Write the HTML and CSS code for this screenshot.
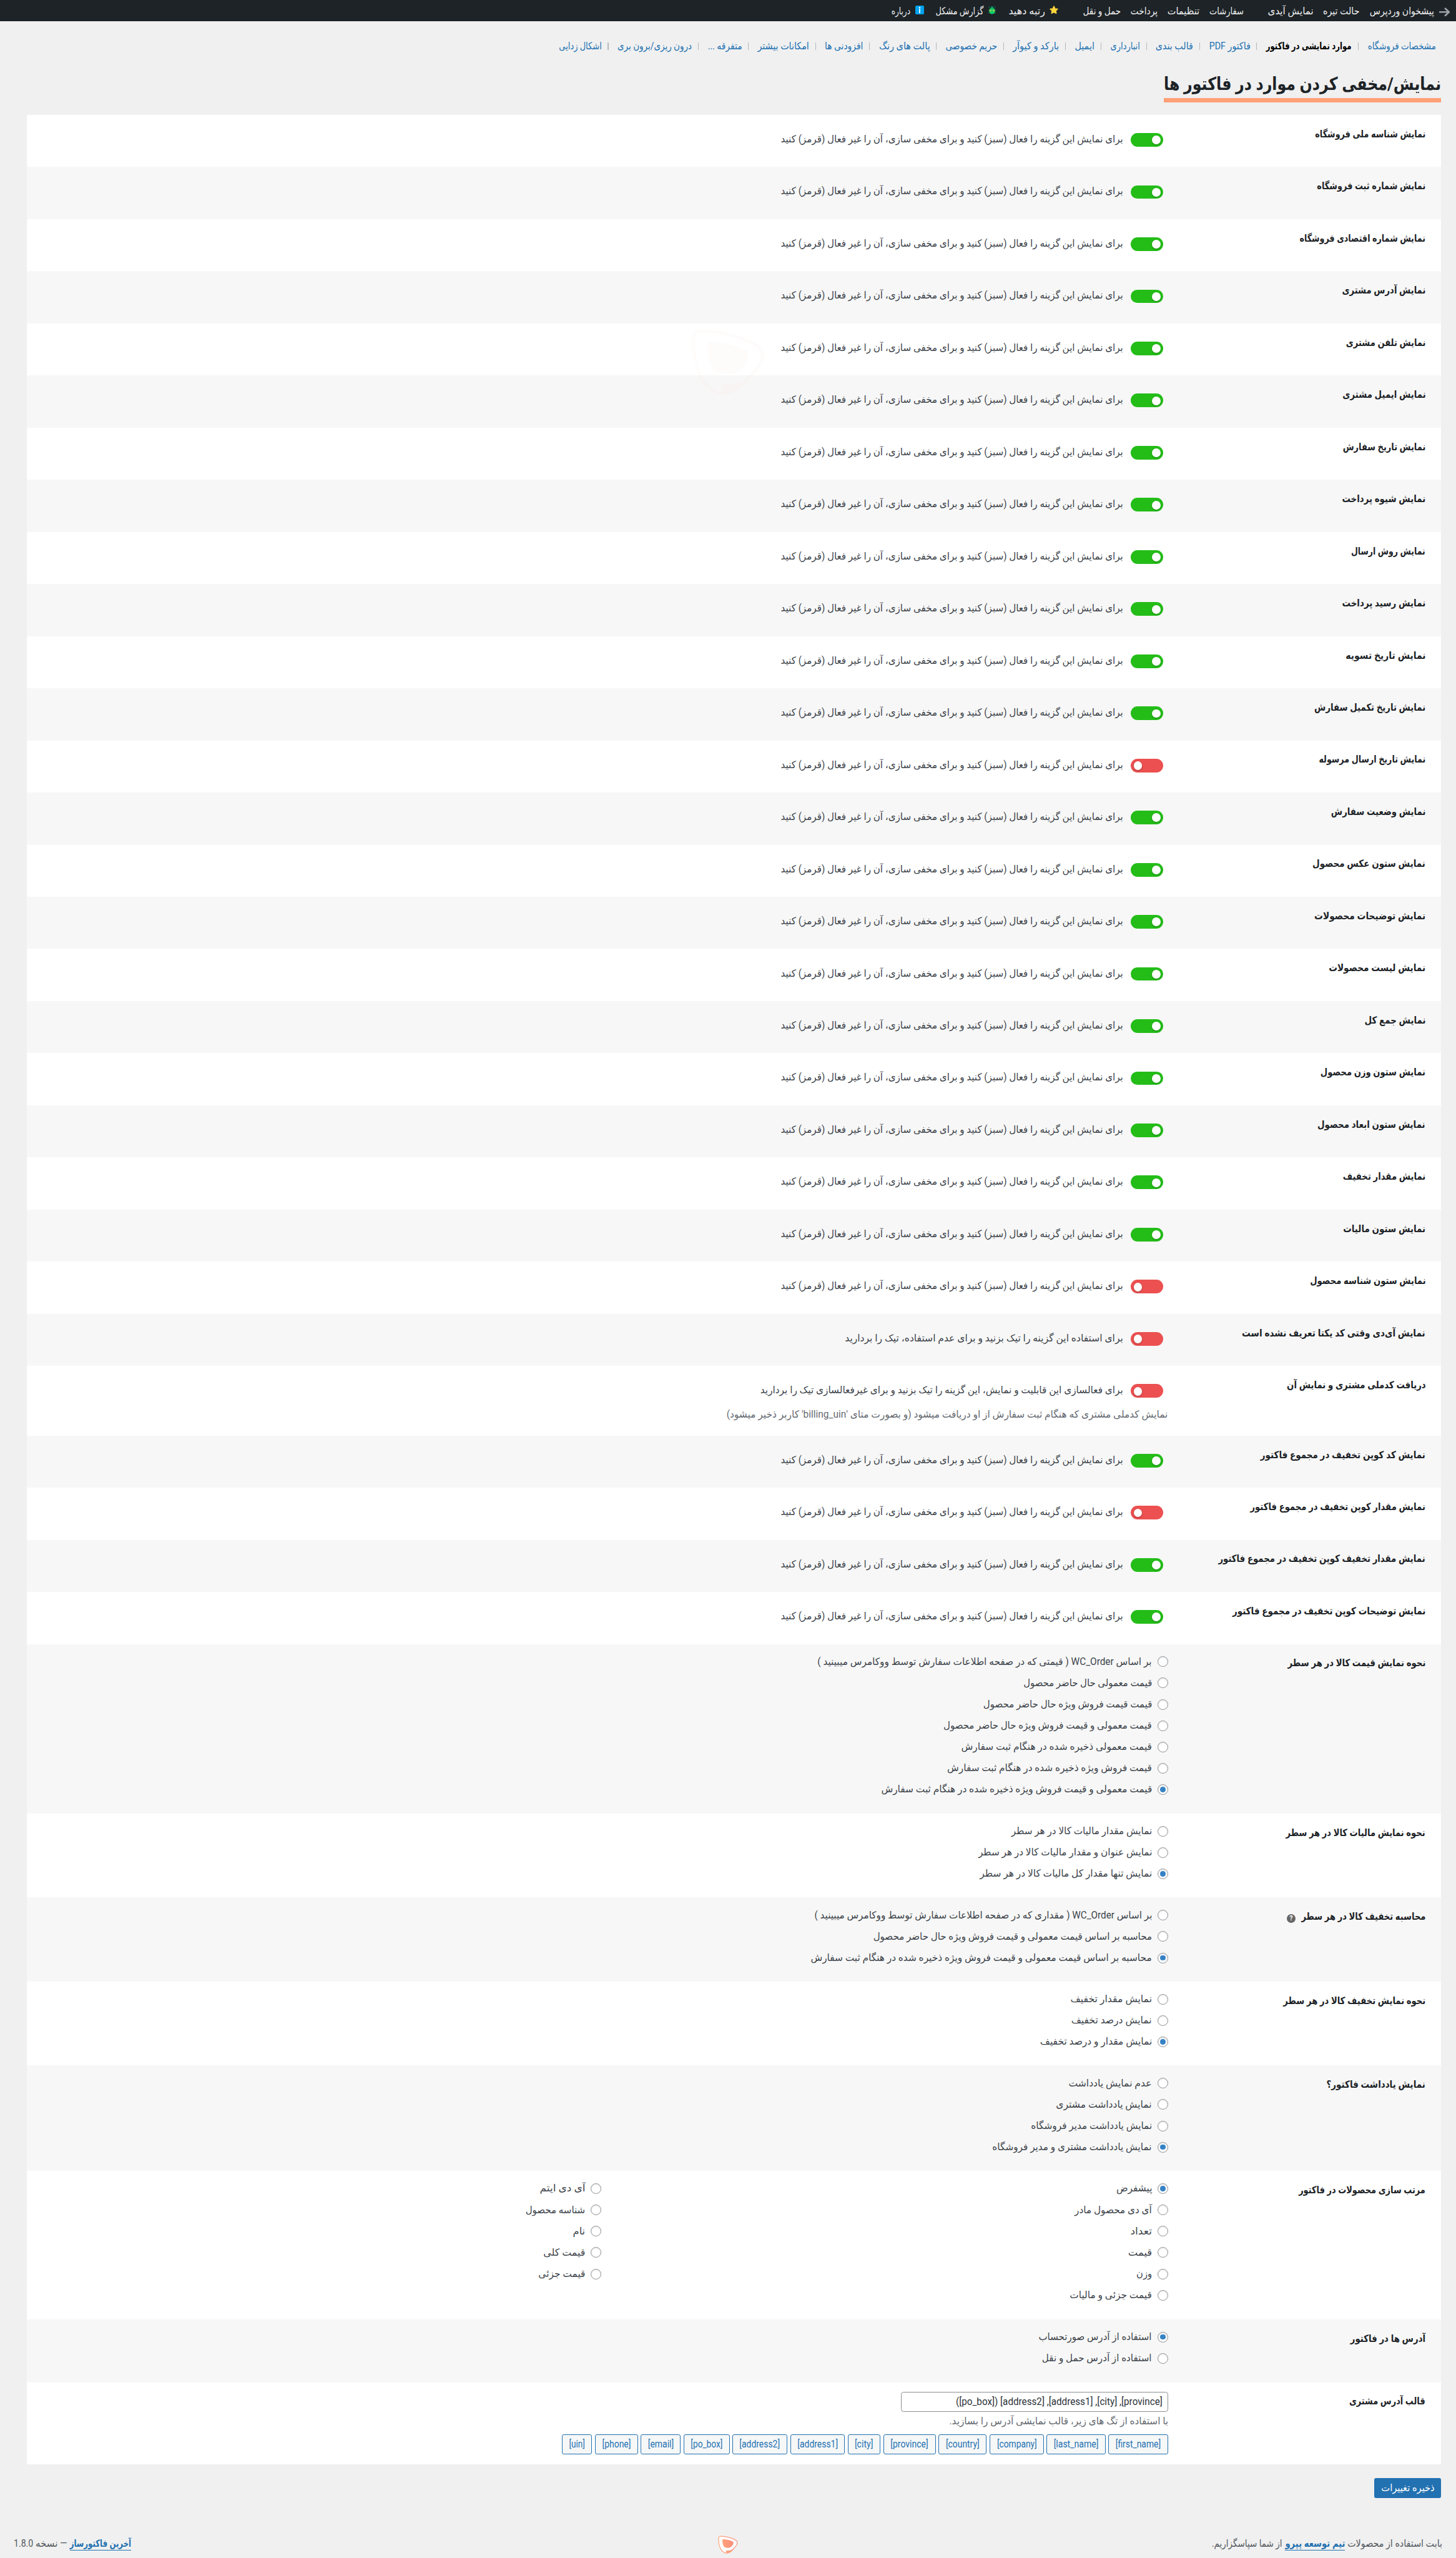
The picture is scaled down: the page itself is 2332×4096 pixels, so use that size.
FILE: index.html
```html
<!DOCTYPE html>
<html lang="fa" dir="rtl">
<head>
<meta charset="utf-8">
<title>نمایش/مخفی کردن موارد در فاکتور ها</title>
<link rel="stylesheet" href="styles.css">
</head>
<body>
<svg class="defs" aria-hidden="true">
  <defs>
    <linearGradient id="peach" x1="0" x2="1" y1="0" y2="0"><stop offset="0" stop-color="#ffa37a"/><stop offset="1" stop-color="#f98f7c"/></linearGradient>
    <symbol id="mark" viewBox="130 25 580 523">
      <path fill="#fff" stroke="url(#peach)" stroke-width="22" d="M205 39C330 35 560 95 640 150C690 180 705 225 690 265C665 330 600 400 520 470C470 515 420 535 365 534C300 525 235 470 200 400C165 320 145 210 144 130C142 75 160 42 205 39Z"/>
      <path fill="url(#peach)" d="M285 128C370 128 500 160 555 190C590 210 588 250 570 285C540 340 490 378 440 383C400 380 350 372 320 358C285 340 262 240 257 160C256 138 265 128 285 128Z"/>
      <path fill="url(#peach)" d="M375 458C420 466 500 466 560 425L622 390C570 450 500 520 430 540L375 543C370 530 385 520 372 505C358 490 358 460 375 458Z"/>
    </symbol>
  </defs>
</svg>

<header class="topbar">
  <svg class="arrow" viewBox="0 0 28 24"><path d="M0 12H25M15 1.500L26 12L15 22.500" fill="none" stroke="#9ca2a7" stroke-width="4.400"/></svg>
  <a data-w="170">پیشخوان وردپرس</a>
  <a data-w="95.5">حالت تیره</a>
  <a data-w="121">نمایش آیدی</a>
  <a class="gap-a" data-w="90.5">سفارشات</a>
  <a data-w="84.5">تنظیمات</a>
  <a data-w="71.5">پرداخت</a>
  <a data-w="99.5">حمل و نقل</a>
  <svg class="emoji star" viewBox="0 0 24 24"><path d="M12 2.200L15 8.600L21.800 9.400L16.800 14.200L18.200 21L12 17.600L5.800 21L7.200 14.200L2.200 9.400L9 8.600Z" fill="#fdd53a" stroke="#fdd53a" stroke-width="3" stroke-linejoin="round"/></svg>
  <a class="after" data-w="96.5">رتبه دهید</a>
  <svg class="emoji" viewBox="0 0 24 24"><path d="M4 2.500V7L7 9M20 2.500V7L17 9M1 12H6M23 12H18M3 22V18L6 15.500M21 22V18L18 15.500M9.500 4L8 1M14.500 4L16 1" fill="none" stroke="#0b8f70" stroke-width="1.300"/><circle cx="12" cy="6" r="3.600" fill="#0b9a72"/><ellipse cx="12" cy="15" rx="8" ry="8.400" fill="#0bd669"/><path d="M12 7V23" stroke="#0b8f70" stroke-width="1"/><path d="M5.500 11.500V15M8.800 10.500V16M18.500 11.500V15M15.200 10.500V16" stroke="#f3c52f" stroke-width="1.800"/></svg>
  <a class="after" data-w="126">گزارش مشکل</a>
  <svg class="emoji" viewBox="0 0 24 24"><rect width="24" height="24" rx="3" fill="#00a3ee"/><circle cx="12" cy="5.500" r="2.100" fill="#fff"/><path d="M12 9V20.500" stroke="#fff" stroke-width="3.200"/></svg>
  <a class="after" data-w="50">درباره</a>
</header>

<nav class="subnav">
  <a data-w="180">مشخصات فروشگاه</a>
  <a class="current" data-w="226">موارد نمایشی در فاکتور</a>
  <a data-w="109">فاکتور PDF</a>
  <a data-w="99">قالب بندی</a>
  <a data-w="78">انبارداری</a>
  <a data-w="52">ایمیل</a>
  <a data-w="122">بارکد و کیوآر</a>
  <a data-w="136">حریم خصوصی</a>
  <a data-w="135">پالت های رنگ</a>
  <a data-w="100.5">افزودنی ها</a>
  <a data-w="136">امکانات بیشتر</a>
  <a data-w="91">متفرقه ...</a>
  <a data-w="196">درون ریزی/برون بری</a>
  <a data-w="113">اشکال زدایی</a>
</nav>

<h1 class="title"><span data-w="731">نمایش/مخفی کردن موارد در فاکتور ها</span></h1>

<main class="settings" id="settings"></main>

<button class="save"><span data-w="141">ذخیره تغییرات</span></button>

<footer class="footer">
  <p class="thanks"><span data-w="250">بابت استفاده از محصولات</span><a data-w="159">تیم توسعه پپرو</a><span data-w="186">از شما سپاسگزاریم.</span></p>
  <svg class="logo"><use href="#mark"/></svg>
  <p class="version"><a data-w="162">آخرین فاکتورساز</a><span data-w="84">— نسخه</span><span data-w="51">1.8.0</span></p>
</footer>

<svg class="watermark"><use href="#mark"/></svg>
<script src="app.js"></script>
</body>
</html>
```
FILE: styles.css
```css
/* 1rem = 100 design pixels */
html { font-size: 60.729px; }
* { box-sizing: border-box; }
body {
  margin: 0;
  height: 67.44rem;
  overflow: hidden;
  position: relative;
  background: #f0f0f0;
  color: #3c434a;
  font-family: Roboto, "DejaVu Sans", sans-serif;
  font-size: .262rem;
  line-height: .3rem;
}
.defs { position: absolute; width: 0; height: 0; }
a { color: #2271b1; text-decoration: none; }
p { margin: 0; }
[data-w] { display: block; flex: none; white-space: nowrap; }
.fit { display: inline-block; transform-origin: 100% 50%; white-space: nowrap; }

.topbar { display: flex; align-items: center; height: .56rem; padding: .03rem .16rem 0 0; background: #1d2327; }
.topbar a { color: #f0f0f1; margin-left: .262rem; }
.topbar .arrow { width: .28rem; height: .24rem; margin: .03rem 0 0 .14rem; }
.topbar .gap-a { margin-right: .363rem; }
.topbar .emoji { width: .23rem; height: .23rem; margin: -.05rem 0 0 .12rem; }
.topbar .star { margin-right: .393rem; }
.topbar .after { margin-left: .31rem; }

.subnav { display: flex; align-items: center; height: .3rem; margin: .5rem .536rem 0 0; padding-top: .01rem; }
.subnav a + a { margin-right: .415rem; position: relative; }
.subnav a + a::before { content: ""; position: absolute; right: -.18rem; top: .05rem; width: .02rem; height: .2rem; background: #b4b9be; }
.subnav .current { color: #000; font-weight: 700; font-family: Roboto, "DejaVu Sans Condensed", "DejaVu Sans", sans-serif; }

.title {
  width: 7.31rem; height: .7rem;
  margin: .64rem .39rem 0 0; padding: 0;
  border-bottom: .12rem solid #ffa078;
  color: #1d2327;
  font: 700 .47rem/.47rem Roboto, "DejaVu Sans Condensed", "DejaVu Sans", sans-serif;
}

.settings { margin: .33rem .39rem 0 .71rem; background: #fff; }
.row { display: grid; grid-template-columns: 7.205rem 1fr; height: 1.3745rem; }
.row:nth-child(even) { background: #f7f7f7; }
.label {
  display: flex; gap: .16rem; padding: .36rem .415rem 0 0;
  color: #1d2327; font-weight: 700; font-size: .262rem;
  font-family: Roboto, "DejaVu Sans Condensed", "DejaVu Sans", sans-serif;
}
.help { width: .23rem; height: .23rem; margin-top: .085rem; border-radius: 50%; background: #666; color: #fff; font-size: .18rem; line-height: .23rem; text-align: center; }
.switch-line { display: flex; align-items: center; gap: .21rem; height: .36rem; margin: .48rem .13rem 0 0; }
.switch-line [data-w] { margin-top: -.03rem; }
.switch { display: flex; align-items: center; width: .85rem; height: .36rem; padding: .01rem .07rem 0; border-radius: .18rem; background: #ec5050; justify-content: flex-end; }
.switch::after { content: ""; width: .23rem; height: .23rem; border-radius: 50%; background: #fff; box-shadow: 0 .02rem .05rem rgba(0,0,0,.25); }
.switch.on { background: #24bd18; justify-content: flex-start; }
.note { color: #646970; height: .5rem; line-height: .5rem; }
.switch-line + .note { margin-top: .19rem; }

.radios { display: grid; grid-template-columns: 1fr; grid-auto-rows: .562rem; align-content: start; padding-top: .185rem; }
.radios.two { grid-template-columns: 14.95rem 1fr; grid-auto-flow: column; grid-template-rows: repeat(6, .562rem); }
.radio { display: flex; align-items: center; gap: .145rem; }
.dot { display: flex; align-items: center; justify-content: center; width: .28rem; height: .28rem; border: 1px solid #8c8f94; border-radius: 50%; background: #fff; box-shadow: inset 0 .02rem .04rem rgba(0,0,0,.1); }
.dot.on::after { content: ""; width: .14rem; height: .14rem; border-radius: 50%; background: #3582c4; }

.template { padding-top: .26rem; }
.field { display: flex; align-items: center; width: 7.05rem; height: .53rem; padding-right: .14rem; border: 1px solid #8c8f94; border-radius: .07rem; background: #fff; color: #2c3338; }
.tags { display: flex; gap: .075rem; margin-top: .08rem; }
.tag { display: flex; align-items: center; justify-content: center; height: .53rem; border: 1px solid #2271b1; border-radius: .05rem; background: #f6f7f7; color: #2271b1; }

.save { display: flex; align-items: center; justify-content: center; width: 1.765rem; height: .53rem; margin: .355rem .39rem 0 0; padding: 0; border: 0; border-radius: .05rem; background: #2271b1; color: #fff; font: inherit; }

.footer { display: flex; align-items: center; justify-content: space-between; height: .5rem; margin: .97rem .36rem 0; color: #50575e; }
.thanks, .version { display: flex; gap: .065rem; width: 8rem; }
.version { justify-content: flex-end; }
.footer a { font-weight: 700; font-family: Roboto, "DejaVu Sans Condensed", "DejaVu Sans", sans-serif; border-bottom: .03rem solid #2271b1; }
.logo { width: .52rem; height: .48rem; }
.watermark { position: absolute; left: 18.23rem; top: 8.68rem; width: 1.94rem; height: 1.74rem; opacity: .025; }
```
FILE: app.js
```javascript
const SWITCH_TEXT = 'برای نمایش این گزینه را فعال (سبز) کنید و برای مخفی سازی، آن را غیر فعال (قرمز) کنید';

// [label, label width, off?, text, text width, note, note width]
const switches = [
  ['نمایش شناسه ملی فروشگاه', 291],
  ['نمایش شماره ثبت فروشگاه', 286],
  ['نمایش شماره اقتصادی فروشگاه', 332],
  ['نمایش آدرس مشتری', 220],
  ['نمایش تلفن مشتری', 211],
  ['نمایش ایمیل مشتری', 220],
  ['نمایش تاریخ سفارش', 218],
  ['نمایش شیوه پرداخت', 220],
  ['نمایش روش ارسال', 196],
  ['نمایش رسید پرداخت', 220],
  ['نمایش تاریخ تسویه', 212],
  ['نمایش تاریخ تکمیل سفارش', 293],
  ['نمایش تاریخ ارسال مرسوله', 281, true],
  ['نمایش وضعیت سفارش', 249],
  ['نمایش ستون عکس محصول', 298],
  ['نمایش توضیحات محصولات', 293],
  ['نمایش لیست محصولات', 255],
  ['نمایش جمع کل', 162],
  ['نمایش ستون وزن محصول', 277],
  ['نمایش ستون ابعاد محصول', 285],
  ['نمایش مقدار تخفیف', 218],
  ['نمایش ستون مالیات', 217],
  ['نمایش ستون شناسه محصول', 306, true],
  ['نمایش آی‌دی وقتی کد یکتا تعریف نشده است', 484, true, 'برای استفاده این گزینه را تیک بزنید و برای عدم استفاده، تیک را بردارید', 734],
  ['دریافت کدملی مشتری و نمایش آن', 367, true, 'برای فعالسازی این قابلیت و نمایش، این گزینه را تیک بزنید و برای غیرفعالسازی تیک را بردارید', 957,
    "نمایش کدملی مشتری که هنگام ثبت سفارش از او دریافت میشود (و بصورت متای 'billing_uin' کاربر ذخیر میشود)", 1163],
  ['نمایش کد کوپن تخفیف در مجموع فاکتور', 435],
  ['نمایش مقدار کوپن تخفیف در مجموع فاکتور', 462, true],
  ['نمایش مقدار تخفیف کوپن تخفیف در مجموع فاکتور', 546],
  ['نمایش توضیحات کوپن تخفیف در مجموع فاکتور', 509],
];

// {label, w, h: row height, on: index of the chosen option, options: [text, width]}
const choices = [
  { label: 'نحوه نمایش قیمت کالا در هر سطر', w: 363, h: 447, on: 6, options: [
    ['بر اساس WC_Order ( قیمتی که در صفحه اطلاعات سفارش توسط ووکامرس میبینید )', 882],
    ['قیمت معمولی حال حاضر محصول', 339],
    ['قیمت قیمت فروش ویژه حال حاضر محصول', 445],
    ['قیمت معمولی و قیمت فروش ویژه حال حاضر محصول', 550],
    ['قیمت معمولی ذخیره شده در هنگام ثبت سفارش', 503],
    ['قیمت فروش ویژه ذخیره شده در هنگام ثبت سفارش', 540],
    ['قیمت معمولی و قیمت فروش ویژه ذخیره شده در هنگام ثبت سفارش', 714]] },
  { label: 'نحوه نمایش مالیات کالا در هر سطر', w: 368, h: 221.5, on: 2, options: [
    ['نمایش مقدار مالیات کالا در هر سطر', 371],
    ['نمایش عنوان و مقدار مالیات کالا در هر سطر', 458],
    ['نمایش تنها مقدار کل مالیات کالا در هر سطر', 454]] },
  { label: 'محاسبه تخفیف کالا در هر سطر', w: 327, h: 221.5, on: 2, help: true, options: [
    ['بر اساس WC_Order ( مقداری که در صفحه اطلاعات سفارش توسط ووکامرس میبینید )', 890],
    ['محاسبه بر اساس قیمت معمولی و قیمت فروش ویژه حال حاضر محصول', 735],
    ['محاسبه بر اساس قیمت معمولی و قیمت فروش ویژه ذخیره شده در هنگام ثبت سفارش', 900]] },
  { label: 'نحوه نمایش تخفیف کالا در هر سطر', w: 375, h: 221.5, on: 2, options: [
    ['نمایش مقدار تخفیف', 215], ['نمایش درصد تخفیف', 213], ['نمایش مقدار و درصد تخفیف', 295]] },
  { label: 'نمایش یادداشت فاکتور؟', w: 261, h: 278, on: 3, options: [
    ['عدم نمایش یادداشت', 220], ['نمایش یادداشت مشتری', 253],
    ['نمایش یادداشت مدیر فروشگاه', 319], ['نمایش یادداشت مشتری و مدیر فروشگاه', 421]] },
  { label: 'مرتب سازی محصولات در فاکتور', w: 334, h: 391, on: 0, two: true, options: [
    ['پیشفرض', 94], ['آی دی محصول مادر', 204], ['تعداد', 57], ['قیمت', 63], ['وزن', 41], ['قیمت جزئی و مالیات', 217],
    ['آی دی ایتم', 121], ['شناسه محصول', 157], ['نام', 32], ['قیمت کلی', 110], ['قیمت جزئی', 123]] },
  { label: 'آدرس ها در فاکتور', w: 198, h: 166, on: 0, options: [
    ['استفاده از آدرس صورتحساب', 299], ['استفاده از آدرس حمل و نقل', 290]] },
];

const tags = [
  ['first_name', 157], ['last_name', 155.6], ['company', 143.5], ['country', 127], ['province', 138], ['city', 86],
  ['address1', 144.5], ['address2', 144.5], ['po_box', 121.5], ['email', 106], ['phone', 113], ['uin', 80],
];

const row = (label, w, body, height, help) =>
  `<section class="row"${height ? ` style="height:${height / 100}rem"` : ''}>
    <div class="label"><span data-w="${w}">${label}</span>${help ? '<span class="help">?</span>' : ''}</div>${body}</section>`;

let html = '';
for (const [label, w, off, text, textW, note, noteW] of switches) {
  html += row(label, w, `<div><div class="switch-line"><span class="switch${off ? '' : ' on'}"></span>
    <span data-w="${textW || 903}">${text || SWITCH_TEXT}</span></div>
    ${note ? `<p class="note" data-w="${noteW}">${note}</p>` : ''}</div>`, note ? 183.5 : 0);
}
for (const c of choices) {
  const items = c.options.map(([t, w], i) =>
    `<label class="radio"><span class="dot${i === c.on ? ' on' : ''}"></span><span data-w="${w}">${t}</span></label>`).join('');
  html += row(c.label, c.w, `<div class="radios${c.two ? ' two' : ''}">${items}</div>`, c.h, c.help);
}
html += row('قالب آدرس مشتری', 201, `<div class="template">
  <div class="field"><span data-w="545">[province], [city], [address1], [address2] ([po_box])</span></div>
  <p class="note" data-w="577">با استفاده از تگ های زیر، قالب نمایشی آدرس را بسازید.</p>
  <div class="tags">${tags.map(([t, w]) =>
    `<span class="tag" style="width:${w / 100}rem"><span data-w="${w - 38}">[${t}]</span></span>`).join('')}</div>
</div>`, 217);
document.getElementById('settings').innerHTML = html;

for (const el of document.querySelectorAll('[data-w]')) {
  const inner = document.createElement('span');
  inner.className = 'fit';
  inner.append(...el.childNodes);
  el.append(inner);
  const target = el.dataset.w * 0.60729;
  el.style.width = target + 'px';
  inner.style.transform = `scaleX(${(target / inner.offsetWidth).toFixed(4)})`;
}
```
